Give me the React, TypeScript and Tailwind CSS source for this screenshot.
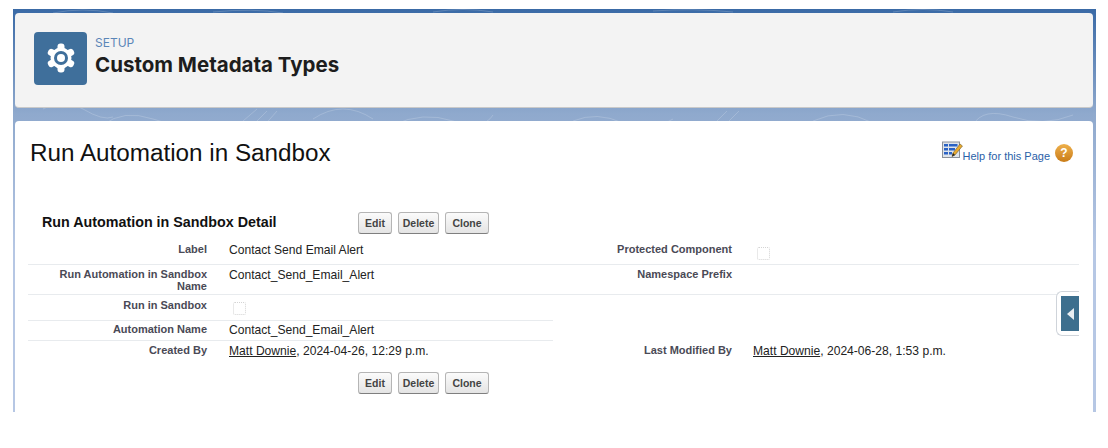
import React from "react";

const Btn: React.FC<{ label: string; width: string }> = ({ label, width }) => (
  <button
    className={`${width} h-[22px] pt-[1px] rounded-[3px] border border-[#b5b5b5] border-b-[#7f7f7f] bg-gradient-to-b from-[#fbfbfb] to-[#e4e4e4] text-[10.5px] font-bold text-[#444] flex items-center justify-center`}
  >
    {label}
  </button>
);

const ButtonRow: React.FC = () => (
  <div className="flex gap-[6px]">
    <Btn label="Edit" width="w-[34px]" />
    <Btn label="Delete" width="w-[41px]" />
    <Btn label="Clone" width="w-[44px]" />
  </div>
);

const Check: React.FC = () => (
  <div className="w-[13px] h-[13px] rounded-[2px] border border-dotted border-[#d4d4d4] bg-white" />
);

const Gear: React.FC = () => (
  <svg width="32" height="32" viewBox="0 0 32 32">
    <g fill="#fff">
      <circle cx="16" cy="16" r="10.5" />
      {[0, 60, 120, 180, 240, 300].map((a) => (
        <rect key={a} x="12.5" y="1.5" width="7" height="8" rx="3" transform={`rotate(${a} 16 16)`} />
      ))}
    </g>
    <circle cx="16" cy="16" r="7" fill="#3f6f9b" />
    <circle cx="16" cy="16" r="4" fill="#fff" />
  </svg>
);

const HelpIcon: React.FC = () => (
  <svg width="21" height="18" viewBox="0 0 21 18">
    <rect x="0.5" y="1" width="17" height="15.5" fill="#dfe4ea" stroke="#8a9099" />
    <g fill="#2a62c4">
      <rect x="2" y="3" width="4" height="2.5" />
      <rect x="7" y="3" width="8.5" height="2.5" />
      <rect x="2" y="7" width="4" height="2.5" />
      <rect x="7" y="7" width="6" height="2.5" />
      <rect x="2" y="11" width="4" height="2.5" />
      <rect x="7" y="11" width="3" height="2.5" />
    </g>
    <path d="M10 15.5 L11 12 L18 3 L20.5 5 L13 14 Z" fill="#e8a92e" stroke="#5a4a20" strokeWidth="0.5" />
    <path d="M10 15.5 L11 12 L13 14 Z" fill="#222" />
  </svg>
);

const Pattern: React.FC = () => (
  <svg className="absolute inset-0 w-full h-full" fill="none" stroke="#ffffff" strokeOpacity="0.18" strokeWidth="1">
    <path d="M30 100 q20 -12 40 0 t30 8 M90 116 q20 -16 50 -6 t40 6 M230 112 l14 -12 M240 116 l14 -14 M250 118 l14 -16 M300 110 q30 -20 60 0 M380 116 q30 -14 60 -4 t40 -6 M560 112 q24 -10 50 2 t50 -4 M700 116 l14 -14 M712 116 l14 -14 M800 112 q30 -14 60 2 M960 116 q10 -18 40 -8 t60 -2" />
    <path d="M40 4 q30 -6 60 0 M200 3 q40 -4 70 1 M420 3 q30 -5 60 0 M640 2 q40 -3 80 1 M880 3 q30 -5 60 0" />
  </svg>
);

const labelCls = "w-[179px] text-right text-[11px] font-bold text-[#4a4a56] leading-[12px]";

const Row: React.FC<{
  h: string;
  pt?: string;
  label: string;
  value?: React.ReactNode;
  rLabel?: string;
  rValue?: React.ReactNode;
  half?: boolean;
  last?: boolean;
}> = ({ h, pt = "pt-[3px]", label, value, rLabel, rValue, half, last }) => (
  <div className={`${h} flex ${half || last ? "" : "border-b border-[#e8ebee]"}`}>
    <div className={`w-[525px] flex shrink-0 ${half ? "border-b border-[#e8ebee]" : ""}`}>
      <div className={`${labelCls} ${pt}`}>{label}</div>
      <div className={`pl-[22px] text-[12.1px] text-[#222] leading-[15px] ${pt}`}>{value}</div>
    </div>
    {rLabel && (
      <div className="flex">
        <div className={`${labelCls} pt-[3px]`}>{rLabel}</div>
        <div className="pl-[21px] text-[12.1px] text-[#222] leading-[15px] pt-[3px]">{rValue}</div>
      </div>
    )}
  </div>
);

const App: React.FC = () => {
  return (
    <div className="w-[1108px] h-[448px] bg-white overflow-hidden font-['Liberation_Sans',Arial,sans-serif]">
      <div className="relative ml-[13px] mt-[9px] w-[1083px] h-[403px] pl-[2px] pr-[3px] pt-[4px] bg-gradient-to-b from-[#3a6aa6] from-0% via-[#8fa9cd] via-26% to-[#b6c7e4] to-60%">
        <Pattern />

        {/* Page header */}
        <div className="relative h-[95px] rounded-[4px] bg-[#f3f3f3] border-b border-[#c9c9c9] flex items-center pl-[19px] pb-[4px] gap-[8px]">
          <div className="w-[53px] h-[53px] rounded-[4px] bg-[#3f6f9b] flex items-center justify-center">
            <Gear />
          </div>
          <div className="-mt-[1px]">
            <div className="text-[12px] leading-[14px] text-[#5b86b8] font-['Inter',sans-serif]">SETUP</div>
            <div className="mt-[1px] text-[20.5px] leading-[28px] font-bold text-[#1d1d1d] font-['Inter',sans-serif]">
              Custom Metadata Types
            </div>
          </div>
        </div>

        {/* Detail card */}
        <div className="relative mt-[13px] h-[291px] rounded-t-[4px] bg-white pt-[16px]">
          <div className="flex justify-between h-[71px]">
            <h1 className="ml-[15px] text-[24.25px] leading-[32px] text-[#111]">Run Automation in Sandbox</h1>
            <div className="mr-[20px] mt-[4px] flex items-start h-[20px]">
              <HelpIcon />
              <span className="mt-[9px] text-[11px] leading-[13px] text-[#2a5fa8]">Help for this Page</span>
              <div className="ml-[5px] mt-[3px] w-[18px] h-[18px] rounded-full bg-gradient-to-b from-[#eeb04a] to-[#c97c16] text-white text-[12px] font-bold flex items-center justify-center">
                ?
              </div>
            </div>
          </div>

          <div className="ml-[27px] mr-[14px] mt-[4px] flex items-center h-[22px]">
            <h2 className="w-[316px] text-[14.3px] font-bold text-[#111]">
              Run Automation in Sandbox Detail
            </h2>
            <ButtonRow />
          </div>

          <div className="ml-[13px] mr-[14px] mt-[6px]">
            <Row h="h-[25px]" label="Label" value="Contact Send Email Alert" rLabel="Protected Component" rValue={<div className="mt-[4px] ml-[4px]"><Check /></div>} />
            <Row h="h-[30px]" label="Run Automation in Sandbox Name" value="Contact_Send_Email_Alert" rLabel="Namespace Prefix" />
            <Row h="h-[26px]" half pt="pt-[4px]" label="Run in Sandbox" value={<div className="mt-[3px] ml-[4px]"><Check /></div>} />
            <Row h="h-[20px]" half pt="pt-[2px]" label="Automation Name" value="Contact_Send_Email_Alert" />
            <Row
              h="h-[31px]"
              last
              label="Created By"
              value={<span><span className="underline">Matt Downie</span>, 2024-04-26, 12:29 p.m.</span>}
              rLabel="Last Modified By"
              rValue={<span><span className="underline">Matt Downie</span>, 2024-06-28, 1:53 p.m.</span>}
            />
          </div>

          <div className="ml-[343px]">
            <ButtonRow />
          </div>

          {/* Collapse tab */}
          <div className="absolute right-[14px] top-[170px] w-[23px] h-[45px] rounded-l-[6px] border border-r-0 border-[#cfd4da] bg-white pl-[4px] py-[4px]">
            <div className="h-full bg-[#3d6f8e] flex items-center justify-center">
              <div className="w-0 h-0 border-y-[6px] border-y-transparent border-r-[7px] border-r-[#e8eef2]" />
            </div>
          </div>
        </div>
      </div>
    </div>
  );
};

export default App;
